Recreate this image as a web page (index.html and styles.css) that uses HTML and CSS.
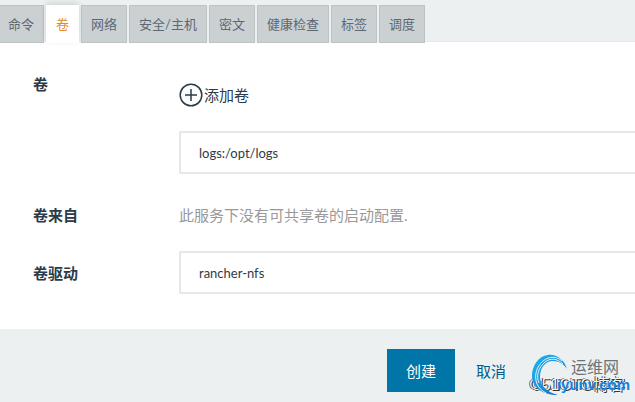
FILE: index.html
```
<!DOCTYPE html>
<html lang="zh-CN">
<head>
  <meta charset="UTF-8" />
  <meta name="viewport" content="width=device-width, initial-scale=1" />
  <title>卷</title>
  <link rel="stylesheet" href="styles.css">
</head>
<body>
  <nav class="tabs">
    <button type="button" class="tab">命令</button>
    <button type="button" class="tab active">卷</button>
    <button type="button" class="tab">网络</button>
    <button type="button" class="tab">安全/主机</button>
    <button type="button" class="tab">密文</button>
    <button type="button" class="tab">健康检查</button>
    <button type="button" class="tab">标签</button>
    <button type="button" class="tab">调度</button>
  </nav>

  <form class="form">
    <div class="row">
      <label class="label" for="volume">卷</label>
      <div class="field">
        <button type="button" class="add">
          <svg width="24" height="24" viewBox="0 0 24 24" fill="none" stroke="currentColor" stroke-width="1.5">
            <circle cx="12" cy="12" r="10.8" />
            <path d="M12 6v12M6 12h12" />
          </svg>
          <span>添加卷</span>
        </button>
        <input class="input" id="volume" type="text" value="logs:/opt/logs">
      </div>
    </div>

    <div class="row">
      <div class="label">卷来自</div>
      <div class="hint">此服务下没有可共享卷的启动配置.</div>
    </div>

    <div class="row row-driver">
      <label class="label" for="driver">卷驱动</label>
      <input class="input" id="driver" type="text" value="rancher-nfs">
    </div>
  </form>

  <footer class="footer">
    <button type="button" class="btn btn-primary">创建</button>
    <button type="button" class="btn btn-link">取消</button>

    <!-- Watermarks -->
    <div class="blog-mark">©51CTO博客</div>
    <div class="site-mark">
      <svg class="swirl" width="40" height="42" viewBox="0 0 40 42">
        <defs>
          <linearGradient id="blue" x1="0" y1="0" x2="1" y2="1">
            <stop offset="0" stop-color="#22b4f0" />
            <stop offset="0.5" stop-color="#1596e0" />
            <stop offset="1" stop-color="#1763b4" />
          </linearGradient>
        </defs>
        <path fill="url(#blue)" d="M36 15C33 5 25 0 17 1C7 2 1 12 1 22C1 33 11 41 27 41C16 38 9 32 9 23C9 13 15 7 22 7C28 7 33 10 36 15Z" />
        <path fill="none" stroke="#ecf0f1" stroke-width="1" d="M31 7C26 2 18 2 12 7C5 13 3 22 6 30C8 34 11 37 15 39" />
        <path fill="none" stroke="#ecf0f1" stroke-width="1" d="M32 10C26 4 19 4 14 8C7 14 5 22 8 29" />
      </svg>
      <span class="site-name">运维网</span>
      <span class="site-url">iyunv.com</span>
    </div>
  </footer>
</body>
</html>
```

FILE: styles.css
```
* {
  box-sizing: border-box;
}

body {
  margin: 0;
  min-height: 100vh;
  display: flex;
  flex-direction: column;
  font-family: Lato, "Noto Sans CJK SC", sans-serif;
  font-size: 15px;
  line-height: 20px;
  color: #2a3b49;
  background-color: #fff;
  overflow-x: hidden;
}

button,
input {
  font-family: inherit;
  margin: 0;
}

/* Tabs */
.tabs {
  display: flex;
  gap: 2px;
  height: 42px;
  padding-top: 5px;
  background-color: #ecf0f1;
  border-bottom: 1px solid #e6eaeb;
}

.tab {
  flex: none;
  height: 38px;
  padding: 0 9px;
  border: 1px solid #bcc3c5;
  background-color: #cbd1d3;
  color: #5d6873;
  font-size: 13px;
  line-height: 20px;
  cursor: pointer;
}

.tab:first-child {
  border-left: 0;
  padding-left: 8px;
}

.tab.active {
  background-color: #fff;
  border-color: #fff;
  color: #e38a2b;
  box-shadow: 0 -2px 6px rgba(0, 0, 0, 0.12);
}

/* Form */
.form {
  flex: 1;
  padding: 32px 0 35px 33px;
}

.row {
  display: grid;
  grid-template-columns: 146px 1fr;
  margin-bottom: 31px;
}

.label {
  font-weight: bold;
}

.row-driver {
  align-items: center;
  margin-bottom: 0;
  margin-top: -5px;
}

.add {
  display: flex;
  align-items: center;
  gap: 1px;
  margin: 9px 0 24px;
  padding: 0;
  border: 0;
  background: none;
  color: inherit;
  font-size: 15px;
  line-height: 20px;
  cursor: pointer;
}

.input {
  display: block;
  width: 100%;
  height: 43px;
  padding: 0 18px;
  border: 2px solid #e4e9e8;
  border-right: 0;
  border-radius: 2px 0 0 2px;
  background-color: #fff;
  color: #2f3b45;
  font-size: 13px;
}

.hint {
  color: #999;
}

/* Footer */
.footer {
  position: relative;
  display: flex;
  padding: 20px 0 10px 387px;
  background-color: #ecf0f1;
}

.btn {
  flex: none;
  height: 43px;
  padding: 0 19px;
  border: 0;
  font-size: 15px;
  line-height: 20px;
  cursor: pointer;
}

.btn-primary {
  background-color: #0075a8;
  color: #fff;
}

.btn-link {
  margin-left: 2px;
  background: none;
  color: #005a8c;
}

/* Watermarks */
.blog-mark {
  position: absolute;
  right: 10px;
  bottom: 7px;
  color: #f4f6f6;
  font-family: "Liberation Sans", "Noto Sans CJK SC", sans-serif;
  font-size: 16px;
  text-shadow: -1px 0 0 #333, 1px 1px 0 #333;
  white-space: nowrap;
}

.site-mark {
  position: absolute;
  right: 5px;
  bottom: 5px;
  width: 100px;
  height: 44px;
}

.swirl {
  position: absolute;
  left: 1px;
  top: 1px;
}

.site-name {
  position: absolute;
  right: 11px;
  top: 4px;
  color: #6b7279;
  font-size: 16px;
}

.site-url {
  position: absolute;
  right: 0;
  top: 22px;
  color: #1583da;
  font-family: "Liberation Sans", sans-serif;
  font-size: 15px;
  font-weight: bold;
}
```
